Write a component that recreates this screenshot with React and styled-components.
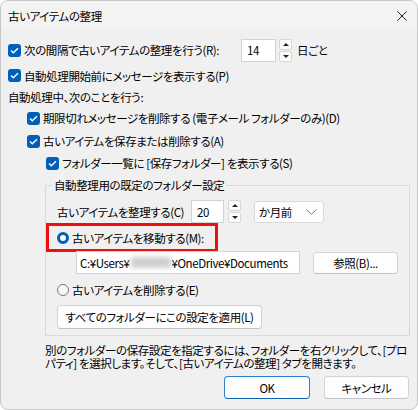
import styled, { createGlobalStyle } from "styled-components";

const GlobalStyle = createGlobalStyle`
  html, body {
    margin: 0;
    padding: 0;
    background: #ffffff;
  }
  body {
    font-family: "Noto Sans CJK JP", "Noto Sans", sans-serif;
    font-size: 11.5px;
    letter-spacing: -0.4px;
    color: #000;
    font-feature-settings: "palt";
  }
`;

const Window = styled.div`
  width: 418px;
  height: 410px;
  box-sizing: border-box;
  border: 1px solid #c6c6c6;
  border-radius: 8px;
  overflow: hidden;
  background: #f0f0f0;
  display: flex;
  flex-direction: column;
`;

const TitleBar = styled.div`
  height: 29px;
  flex-shrink: 0;
  background: #f3f3f3;
  display: flex;
  align-items: center;
  justify-content: space-between;
  padding: 0 10px 0 7px;
`;

const Content = styled.div`
  padding: 0 7px;
  display: flex;
  flex-direction: column;
`;

const Row = styled.div`
  display: flex;
  align-items: center;
  flex-shrink: 0;
  height: ${(p) => p.$h || 20}px;
  margin-top: ${(p) => p.$mt || 0}px;
  padding-left: ${(p) => p.$indent || 0}px;
  gap: ${(p) => (p.$gap === undefined ? 3 : p.$gap)}px;
  white-space: nowrap;
`;

const Label = styled.span`
  width: ${(p) => (p.$w ? `${p.$w}px` : "auto")};
  padding-left: ${(p) => p.$pl || 0}px;
  box-sizing: border-box;
  flex-shrink: 0;
`;

const CheckBox = styled.span`
  width: 13px;
  height: 13px;
  border-radius: 3px;
  background: #005fb8;
  display: flex;
  align-items: center;
  justify-content: center;
  flex-shrink: 0;
`;

const Radio = styled.span`
  width: 12px;
  height: 12px;
  box-sizing: border-box;
  border-radius: 50%;
  flex-shrink: 0;
  border: ${(p) => (p.$on ? "3.5px solid #005fb8" : "1px solid #7a7a7a")};
  background: ${(p) => (p.$on ? "#ffffff" : "#f7f7f7")};
`;

const NumBox = styled.div`
  width: ${(p) => p.$w}px;
  height: 23px;
  box-sizing: border-box;
  background: #fff;
  border: 1px solid #d2d2d2;
  display: flex;
  align-items: center;
  padding-left: 5px;
  flex-shrink: 0;
`;

const Spin = styled.div`
  width: 13px;
  height: 23px;
  display: flex;
  flex-direction: column;
  gap: 1px;
  flex-shrink: 0;
  margin-left: ${(p) => p.$ml || 0}px;
  margin-right: ${(p) => p.$mr || 0}px;
`;

const SpinHalf = styled.div`
  flex: 1;
  background: #fbfbfb;
  border: 1px solid #d6d6d6;
  border-radius: 2px;
  display: flex;
  align-items: center;
  justify-content: center;
`;

const Tri = styled.span`
  width: 0;
  height: 0;
  border-left: 3px solid transparent;
  border-right: 3px solid transparent;
  ${(p) =>
    p.$down
      ? "border-top: 3px solid #222;"
      : "border-bottom: 3px solid #222;"}
`;

const Select = styled.div`
  width: 70px;
  height: 22px;
  box-sizing: border-box;
  background: #fdfdfd;
  border: 1px solid #dadada;
  border-radius: 3px;
  display: flex;
  align-items: center;
  justify-content: space-between;
  padding: 0 6px 0 4px;
  flex-shrink: 0;
`;

const Group = styled.fieldset`
  margin: 4px 0 0 37px;
  padding: 0 0 6px 0;
  border: 1px solid #dadada;
  min-width: 0;
`;

const Legend = styled.legend`
  margin-left: 6px;
  padding: 0 2px;
  line-height: 16px;
`;

const GroupBody = styled.div`
  padding-left: 11px;
  display: flex;
  flex-direction: column;
`;

const Highlight = styled.div`
  margin-left: -11px;
  width: 172px;
  height: 29px;
  box-sizing: border-box;
  border: 3px solid #ee1111;
  padding: 1px 0 0 8px;
  display: flex;
  align-items: center;
  gap: 3px;
  white-space: nowrap;
`;

const PathBox = styled.div`
  width: 224px;
  height: 23px;
  box-sizing: border-box;
  background: #fff;
  border: 1px solid #d2d2d2;
  display: flex;
  align-items: center;
  padding-left: 3px;
  overflow: hidden;
  white-space: nowrap;
  flex-shrink: 0;
  align-self: flex-start;
`;

const Blurred = styled.span`
  display: inline-block;
  width: 40px;
  height: 11px;
  margin: 0 1px;
  background: #cfcfcf;
  filter: blur(2.5px);
  flex-shrink: 0;
`;

const Button = styled.button`
  font: inherit;
  letter-spacing: inherit;
  color: #000;
  width: ${(p) => p.$w}px;
  height: ${(p) => p.$h || 23}px;
  box-sizing: border-box;
  background: #fdfdfd;
  border: 1px solid ${(p) => (p.$primary ? "#2f7fcc" : "#d3d3d3")};
  border-bottom-color: ${(p) => (p.$primary ? "#0f5fb0" : "#c2c2c2")};
  border-radius: 4px;
  padding: 0;
  display: flex;
  align-items: center;
  justify-content: center;
  flex-shrink: 0;
  white-space: nowrap;
`;

const Note = styled.div`
  margin-top: 8px;
  padding-left: 37px;
  display: flex;
  flex-direction: column;
`;

const NoteLine = styled.span`
  height: 13px;
  line-height: 13px;
  white-space: nowrap;
`;

const Footer = styled.div`
  display: flex;
  justify-content: flex-end;
  gap: 14px;
  margin: 6px 1px 0 0;
`;

function Check() {
  return (
    <CheckBox>
      <svg width="9" height="7" viewBox="0 0 9 7">
        <path d="M1 3.6 L3.3 5.8 L8 1.2" fill="none" stroke="#fff" strokeWidth="1.4" />
      </svg>
    </CheckBox>
  );
}

function Spinner({ ml, mr }) {
  return (
    <Spin $ml={ml} $mr={mr}>
      <SpinHalf>
        <Tri />
      </SpinHalf>
      <SpinHalf>
        <Tri $down />
      </SpinHalf>
    </Spin>
  );
}

export default function App() {
  return (
    <>
      <GlobalStyle />
      <Window>
        <TitleBar>
          <span>古いアイテムの整理</span>
          <svg width="10" height="10" viewBox="0 0 10 10">
            <path d="M0.5 0.5 L9.5 9.5 M9.5 0.5 L0.5 9.5" stroke="#222" strokeWidth="1" />
          </svg>
        </TitleBar>
        <Content>
          <Row $h={24} $mt={8} $gap={0}>
            <Check />
            <Label $w={220} $pl={3}>
              次の間隔で古いアイテムの整理を行う(R):
            </Label>
            <NumBox $w={35}>14</NumBox>
            <Spinner ml={3} mr={5} />
            <span>日ごと</span>
          </Row>
          <Row $h={23} $mt={2}>
            <Check />
            <span>自動処理開始前にメッセージを表示する(P)</span>
          </Row>
          <Row>
            <span>自動処理中、次のことを行う:</span>
          </Row>
          <Row $mt={1} $indent={19}>
            <Check />
            <span>期限切れメッセージを削除する (電子メール フォルダーのみ)(D)</span>
          </Row>
          <Row $mt={3} $indent={19}>
            <Check />
            <span>古いアイテムを保存または削除する(A)</span>
          </Row>
          <Row $mt={2} $indent={38}>
            <Check />
            <span>フォルダー一覧に [保存フォルダー] を表示する(S)</span>
          </Row>

          <Group>
            <Legend>自動整理用の既定のフォルダー設定</Legend>
            <GroupBody>
              <Row $h={23} $mt={7} $gap={0}>
                <Label $w={134}>古いアイテムを整理する(C)</Label>
                <NumBox $w={33}>20</NumBox>
                <Spinner ml={4} mr={13} />
                <Select>
                  <span>か月前</span>
                  <svg width="11" height="6" viewBox="0 0 11 6">
                    <polyline points="0.5,0.5 5.5,5.3 10.5,0.5" fill="none" stroke="#777" strokeWidth="1" />
                  </svg>
                </Select>
              </Row>
              <Highlight>
                <Radio $on />
                <span>古いアイテムを移動する(M):</span>
              </Highlight>
              <Row $h={24} $mt={-1} $indent={19} $gap={13}>
                <PathBox>
                  <span>C:¥Users¥</span>
                  <Blurred />
                  <span>¥OneDrive¥Documents</span>
                </PathBox>
                <Button $w={85} $h={22}>参照(B)...</Button>
              </Row>
              <Row $mt={5}>
                <Radio />
                <span>古いアイテムを削除する(E)</span>
              </Row>
              <Row $h={24} $mt={5}>
                <Button $w={205} $h={24}>すべてのフォルダーにこの設定を適用(L)</Button>
              </Row>
            </GroupBody>
          </Group>

          <Note>
            <NoteLine>別のフォルダーの保存設定を指定するには、フォルダーを右クリックして、[プロ</NoteLine>
            <NoteLine>パティ] を選択します。そして、[古いアイテムの整理] タブを開きます。</NoteLine>
          </Note>

          <Footer>
            <Button $w={86} $primary>OK</Button>
            <Button $w={85}>キャンセル</Button>
          </Footer>
        </Content>
      </Window>
    </>
  );
}
